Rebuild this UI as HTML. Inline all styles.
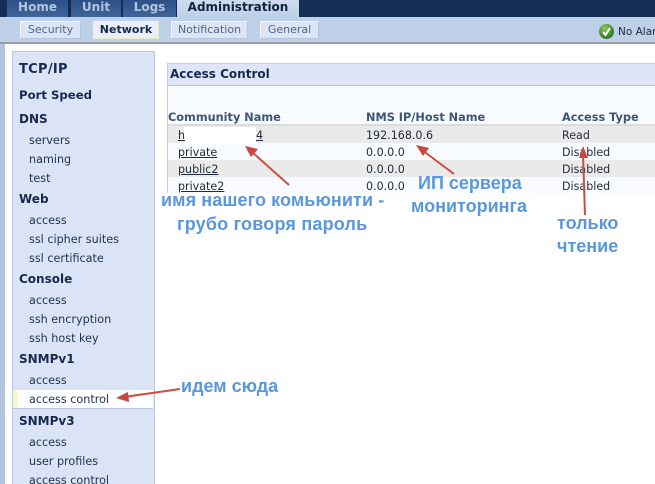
<!DOCTYPE html>
<html><head><meta charset="utf-8">
<style>
html,body{margin:0;padding:0;background:#fff}
#p{position:relative;width:655px;height:484px;overflow:hidden;background:#fff;font-family:"DejaVu Sans","Liberation Sans",sans-serif;color:#1a2a44}
#p div{position:absolute;white-space:nowrap}
.tab{top:0;height:17px;line-height:14px;text-align:center;font-weight:bold;font-size:12px;color:#b4c4dc;background:linear-gradient(#2c4f85,#3f659c)}
.sub{top:21px;height:16px;line-height:16px;text-align:center;font-size:11px;color:#4f6683;background:#dce5f5;border:1px solid #eef3fb;border-color:#f2f6fc #b4c4da #b4c4da #f2f6fc}
.h{left:19px;font-size:12px;font-weight:bold;color:#17294d;line-height:14px}
.i{left:29px;font-size:11.2px;color:#22334f;line-height:14px}
.th{font-size:11.3px;font-weight:bold;color:#3c5578;line-height:14px}
.c{font-size:11.1px;color:#222c3a;line-height:14px}
.u{text-decoration:underline}
.r{font-family:"Liberation Sans",sans-serif;font-weight:bold;font-size:18px;color:#5a97dc;line-height:20px}
</style></head><body><div id="p">
<div style="left:0;top:0;width:655px;height:17px;background:#152d55"></div>
<div class="tab" style="left:7px;width:61px">Home</div>
<div class="tab" style="left:71px;width:50px">Unit</div>
<div class="tab" style="left:123px;width:53px">Logs</div>
<div class="tab" style="left:177px;width:122px;background:linear-gradient(#cfdcef,#bdd0e8);color:#10233f">Administration</div>
<div style="left:0;top:17px;width:655px;height:25px;background:#bdd0e8"></div>
<div style="left:0;top:42px;width:655px;height:2px;background:#9a9da3"></div>
<div class="sub" style="left:20px;width:59px">Security</div>
<div class="sub" style="left:93px;width:64px;font-weight:bold;color:#17294d;background:#e9eefa;border-color:#f8f6cf #dfe8c8 #e8ecc0 #f5f2b8">Network</div>
<div class="sub" style="left:171px;width:75px">Notification</div>
<div class="sub" style="left:260px;width:57px">General</div>
<div style="left:599px;top:24px;width:15px;height:15px;border-radius:50%;background:radial-gradient(circle at 40% 30%,#8cc860,#2f7a22 70%)"></div>
<svg style="position:absolute;left:599px;top:24px" width="15" height="15"><path d="M4 8l2.500 3L11 4" fill="none" stroke="#fff" stroke-width="2"/></svg>
<div style="left:618px;top:25px;font-size:10.500px;line-height:14px;color:#222c3a">No Alarms</div>
<div style="left:0;top:44px;width:5px;height:440px;background:#b4c5e0"></div>

<div style="left:12px;top:51px;width:141px;height:433px;background:#dbe4f6;border:1px solid #bccadd;border-bottom:0"></div>
<div style="left:13px;top:390px;width:140px;height:18px;background:#fff;border-bottom:1px solid #b9c6da"></div>
<div style="left:13px;top:390px;width:4px;height:18px;background:#f8f6bc"></div>
<div class="h" style="top:63px;font-size:13px;letter-spacing:.3px">TCP/IP</div>
<div class="h" style="top:88px;font-size:11.700px">Port Speed</div>
<div class="h" style="top:112px">DNS</div>
<div class="i" style="top:134px">servers</div>
<div class="i" style="top:153px">naming</div>
<div class="i" style="top:172px">test</div>
<div class="h" style="top:192px">Web</div>
<div class="i" style="top:214px">access</div>
<div class="i" style="top:233px">ssl cipher suites</div>
<div class="i" style="top:252px">ssl certificate</div>
<div class="h" style="top:272px">Console</div>
<div class="i" style="top:294px">access</div>
<div class="i" style="top:313px">ssh encryption</div>
<div class="i" style="top:332px">ssh host key</div>
<div class="h" style="top:352px">SNMPv1</div>
<div class="i" style="top:374px">access</div>
<div class="i" style="top:393px">access control</div>
<div class="h" style="top:414px">SNMPv3</div>
<div class="i" style="top:436px">access</div>
<div class="i" style="top:455px">user profiles</div>
<div class="i" style="top:474px">access control</div>

<div style="left:167px;top:63px;width:488px;height:130px;background:#f8fbff"></div>
<div style="left:167px;top:63px;width:488px;height:21px;background:#dde5f6;border-top:1px solid #c8cdd6;border-bottom:1px solid #bcc0c8"></div>
<div style="left:167px;top:63px;width:1px;height:130px;background:#c8cdd6"></div>
<div style="left:170px;top:67px;font-size:12px;font-weight:bold;line-height:15px;color:#17294d">Access Control</div>
<div class="th" style="left:168px;top:111px">Community Name</div>
<div class="th" style="left:366px;top:111px">NMS IP/Host Name</div>
<div class="th" style="left:562px;top:111px">Access Type</div>
<div style="left:168px;top:124px;width:487px;height:19px;background:#eaeaea;border-top:2px solid #dcdcdc;box-sizing:border-box"></div>
<div style="left:168px;top:160px;width:487px;height:17px;background:#eaeaea"></div>
<div style="left:184px;top:127px;width:72px;height:16px;background:#fff"></div>
<div class="c u" style="left:178px;top:129px">h</div>
<div class="c u" style="left:256px;top:129px">4</div>
<div class="c" style="left:366px;top:129px">192.168.0.6</div>
<div class="c" style="left:562px;top:129px">Read</div>
<div class="c u" style="left:178px;top:146px">private</div>
<div class="c" style="left:366px;top:146px">0.0.0.0</div>
<div class="c" style="left:562px;top:146px">Disabled</div>
<div class="c u" style="left:178px;top:163px">public2</div>
<div class="c" style="left:366px;top:163px">0.0.0.0</div>
<div class="c" style="left:562px;top:163px">Disabled</div>
<div class="c u" style="left:178px;top:180px">private2</div>
<div class="c" style="left:366px;top:180px">0.0.0.0</div>
<div class="c" style="left:562px;top:180px">Disabled</div>

<div class="r" style="left:161px;top:190px;letter-spacing:.1px">имя нашего комьюнити -</div>
<div class="r" style="left:177px;top:214px;letter-spacing:.2px">грубо говоря пароль</div>
<div class="r" style="left:418px;top:173px">ИП сервера</div>
<div class="r" style="left:411px;top:196px">мониторинга</div>
<div class="r" style="left:557px;top:213px">только</div>
<div class="r" style="left:557px;top:236px">чтение</div>
<div class="r" style="left:181px;top:376px">идем сюда</div>

<svg style="position:absolute;left:0;top:0" width="655" height="484" fill="#c9473d" stroke="none">
<g stroke="#c9503f" stroke-width="2" fill="none">
<path d="M289 185L252 152"/>
<path d="M454 174L422 150"/>
<path d="M585 215L583 155"/>
<path d="M180 389L124 397"/>
</g>
<path d="M245 146l13 3-7 8z"/>
<path d="M416 145l13 3-6 8z"/>
<path d="M583 146l5 12h-9z"/>
<path d="M116 398l12-6 1 10z"/>
</svg>
</div></body></html>
